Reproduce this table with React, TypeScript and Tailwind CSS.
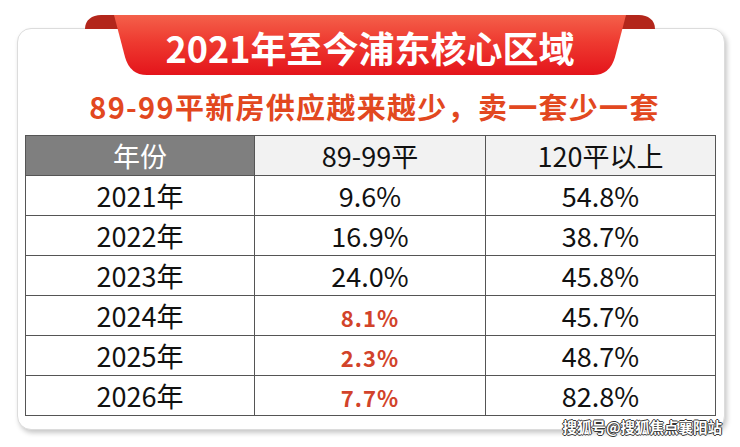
const ROWS = [
  { year: '2021年', small: '9.6%', big: '54.8%', hot: false },
  { year: '2022年', small: '16.9%', big: '38.7%', hot: false },
  { year: '2023年', small: '24.0%', big: '45.8%', hot: false },
  { year: '2024年', small: '8.1%', big: '45.7%', hot: true },
  { year: '2025年', small: '2.3%', big: '48.7%', hot: true },
  { year: '2026年', small: '7.7%', big: '82.8%', hot: true },
];

const FONT = "font-['Noto_Sans_CJK_SC','Noto_Sans',sans-serif]";

function Ribbon() {
  return (
    <svg className="absolute inset-0" width="570" height="60" viewBox="0 0 570 60">
      <defs>
        <linearGradient id="rb" x1="0" y1="0" x2="0" y2="1">
          <stop offset="0" stopColor="#f4604a" />
          <stop offset="0.45" stopColor="#ee3a30" />
          <stop offset="1" stopColor="#e4141b" />
        </linearGradient>
      </defs>
      {/* folded ends */}
      <path d="M0 14 C0 5 7 0 16 0 L36 0 L36 14 Z" fill="#b3261b" />
      <path d="M534 0 L554 0 C563 0 570 5 570 14 L534 14 Z" fill="#b3261b" />
      {/* main band */}
      <path d="M29 0 L541 0 L530 42 Q525 60 508 60 L62 60 Q45 60 40 42 Z" fill="url(#rb)" />
    </svg>
  );
}

export default function App() {
  return (
    <div className={`w-[740px] h-[447px] bg-white relative overflow-hidden ${FONT}`}>
      <div className="pt-[28px] pl-[17px]">
        <div className="relative w-[708px] h-[402px] rounded-[14px] border border-[#dcdcdc] bg-white shadow-[2px_3px_5px_rgba(0,0,0,0.22)] pt-[59px] pl-[7px]">
          {/* title ribbon */}
          <div className="absolute left-[67px] top-[-14px] w-[570px] h-[60px]">
            <Ribbon />
            <div className="relative h-full flex items-center justify-center pt-[3px] text-white text-[36px] font-bold leading-none">
              2021年至今浦东核心区域
            </div>
          </div>

          <div className="h-[36px] leading-[36px] text-center text-[29px] font-bold text-[#e2481f] tracking-[1.3px]">
            89-99平新房供应越来越少，卖一套少一套
          </div>

          <table className="mt-[11px] w-[690px] border-collapse table-fixed text-[#111]">
            <colgroup>
              <col className="w-[229px]" />
              <col className="w-[231px]" />
              <col className="w-[230px]" />
            </colgroup>
            <thead>
              <tr className="h-[40px] text-[27px] leading-none">
                <th className="font-normal bg-[#7f7f7f] text-white border border-[#555]">年份</th>
                <th className="font-normal bg-[#f2f2f2] border border-[#555]">89-99平</th>
                <th className="font-normal bg-[#f2f2f2] border border-[#555]">120平以上</th>
              </tr>
            </thead>
            <tbody>
              {ROWS.map((r) => (
                <tr key={r.year} className="h-[40px] text-[27px] leading-none text-center">
                  <td className="border border-[#555]">{r.year}</td>
                  <td className="border border-[#555]">
                    {r.hot ? (
                      <span className="text-[22px] font-semibold text-[#d2432a] tracking-[1px]">{r.small}</span>
                    ) : (
                      r.small
                    )}
                  </td>
                  <td className="border border-[#555]">{r.big}</td>
                </tr>
              ))}
            </tbody>
          </table>
        </div>
      </div>

      <div className="absolute right-[18px] top-[420px] text-[14.5px] font-bold text-white leading-none [text-shadow:1px_0_0_#333,-1px_0_0_#333,0_1px_0_#333,0_-1px_0_#333]">
        搜狐号@搜狐焦点襄阳站
      </div>
    </div>
  );
}
